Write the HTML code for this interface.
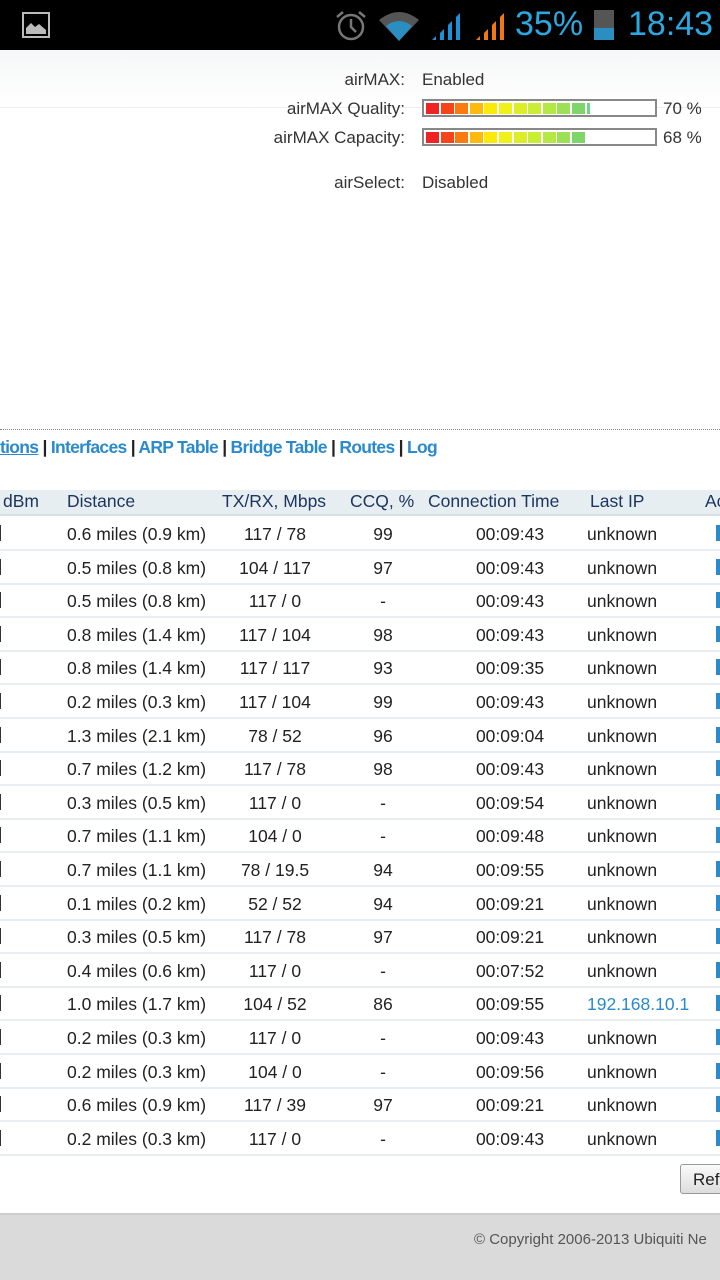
<!DOCTYPE html>
<html><head><meta charset="utf-8"><style>
*{margin:0;padding:0;box-sizing:border-box}
body{width:720px;height:1280px;position:relative;overflow:hidden;background:#fff;font-family:"Liberation Sans",sans-serif;color:#222}
.a{position:absolute;white-space:nowrap}
.sb{position:absolute;left:0;top:0;width:720px;height:50px;background:#000}
.lbl{font-size:17px;color:#333}
.bar{position:absolute;left:422px;width:235px;height:18px;border:2px solid #888;background:#fff}
.seg{position:absolute;top:2px;height:11px;width:13px}
.row{position:absolute;left:0;width:720px;height:34px;border-bottom:2px solid #e8eef2;font-size:17.5px;color:#222}
.row div{position:absolute;top:7px;white-space:nowrap}
.c{text-align:center}
</style></head><body>
<div class="sb">
<svg class="a" style="left:22px;top:12px" width="28" height="26" viewBox="0 0 28 26"><rect x="1" y="1" width="26" height="24" fill="none" stroke="#bbb" stroke-width="2"/><path d="M4 22 L4 16 L9 11 L13 15 L17 12 L24 18 L24 22Z" fill="#bbb"/></svg>
<svg class="a" style="left:334px;top:9px" width="34" height="32" viewBox="0 0 34 32"><circle cx="17" cy="18" r="12" fill="none" stroke="#777" stroke-width="2.5"/><path d="M17 10 L17 18 L22 23" stroke="#777" stroke-width="2.5" fill="none"/><path d="M3 8 L9 3 M31 8 L25 3" stroke="#777" stroke-width="2.5"/></svg>
<svg class="a" style="left:378px;top:10px" width="42" height="32" viewBox="0 0 42 32"><path d="M1 10 Q21 -6 41 10 L21 31Z" fill="#555"/><path d="M8 16 Q21 6 34 16 L21 31Z" fill="#2a8fc0"/></svg>
<svg class="a" style="left:430px;top:10px" width="34" height="32" viewBox="0 0 34 32"><path d="M2 30 L6 30 L6 26Z M10 30 L14 30 L14 19 L10 23Z M18 30 L22 30 L22 11 L18 15Z M26 30 L30 30 L30 3 L26 7Z" fill="#1e90d8"/></svg>
<svg class="a" style="left:474px;top:10px" width="34" height="32" viewBox="0 0 34 32"><path d="M2 30 L6 30 L6 26Z M10 30 L14 30 L14 19 L10 23Z M18 30 L22 30 L22 11 L18 15Z M26 30 L30 30 L30 3 L26 7Z" fill="#f07818"/></svg>
<div class="a" style="left:515px;top:5px;font-size:34px;color:#2ba8e0">35%</div>
<div class="a" style="left:594px;top:10px;width:20px;height:30px;background:#555"></div>
<div class="a" style="left:594px;top:28px;width:20px;height:12px;background:#2a8fc0"></div>
<div class="a" style="left:628px;top:5px;font-size:34px;color:#2ba8e0">18:43</div>
</div>
<div class="a" style="left:0;top:50px;width:720px;height:58px;background:linear-gradient(#f6f7f8,#fff)"></div>
<div class="a" style="left:0;top:107px;width:720px;height:1px;background:#eee"></div>
<div class="a lbl" style="right:315px;top:70px">airMAX:</div>
<div class="a lbl" style="left:422px;top:70px">Enabled</div>
<div class="a lbl" style="right:315px;top:99px">airMAX Quality:</div>
<div class="a lbl" style="right:315px;top:128px">airMAX Capacity:</div>
<div class="a lbl" style="left:663px;top:99px">70 %</div>
<div class="a lbl" style="left:663px;top:128px">68 %</div>
<div class="a lbl" style="right:315px;top:173px">airSelect:</div>
<div class="a lbl" style="left:422px;top:173px">Disabled</div>
<div class="bar" style="top:99px" id="b1"></div>
<div class="bar" style="top:128px" id="b2"></div>
<div class="a" style="left:0;top:429px;width:720px;border-top:1px dotted #888"></div>
<div class="a" style="left:0;top:437px;font-size:17.5px;font-weight:bold;color:#2a8acb;letter-spacing:-0.7px"><span style="text-decoration:underline">tions</span> <span style="color:#222">|</span> Interfaces <span style="color:#222">|</span> ARP Table <span style="color:#222">|</span> Bridge Table <span style="color:#222">|</span> Routes <span style="color:#222">|</span> Log</div>
<div class="a" style="left:0;top:490px;width:720px;height:26px;background:#e6eef2;border-bottom:2px solid #d8e0e4"></div>
<div class="a" style="left:0;top:491px;font-size:17.5px;color:#1e3560">
<span class="a" style="left:3px">dBm</span><span class="a" style="left:67px">Distance</span><span class="a" style="left:222px">TX/RX, Mbps</span><span class="a" style="left:350px">CCQ, %</span><span class="a" style="left:428px">Connection Time</span><span class="a" style="left:590px">Last IP</span><span class="a" style="left:705px">Ac</span></div>
<div id="rows"></div>
<div class="a" style="left:680px;top:1164px;width:50px;height:30px;border:1px solid #999;border-radius:3px;background:linear-gradient(#fafafa,#ddd);font-size:17px;padding:5px 0 0 12px">Refr</div>
<div class="a" style="left:0;top:1213px;width:720px;height:67px;background:#dadada;border-top:2px solid #ccc"></div>
<div class="a" style="left:474px;top:1231px;font-size:15px;color:#555">© Copyright 2006-2013 Ubiquiti Ne</div>
<script>
var cols=['#ee2424','#f5431a','#fb7a10','#fdb90c','#fbe90a','#eef11a','#dcee28','#c9ee35','#b3e845','#9be055','#7ed56a'];
function bar(id,n,extra){var b=document.getElementById(id),h='';for(var i=0;i<n;i++)h+='<div class="seg" style="left:'+(2+i*14.6)+'px;background:'+cols[i]+'"></div>';if(extra)h+='<div class="seg" style="left:'+(2+n*14.6)+'px;width:3px;background:#6ed38a"></div>';b.innerHTML=h;}
bar('b1',11,1);bar('b2',11,0);
var d=[["0.6 miles (0.9 km)","117 / 78","99","00:09:43","unknown"],["0.5 miles (0.8 km)","104 / 117","97","00:09:43","unknown"],["0.5 miles (0.8 km)","117 / 0","-","00:09:43","unknown"],["0.8 miles (1.4 km)","117 / 104","98","00:09:43","unknown"],["0.8 miles (1.4 km)","117 / 117","93","00:09:35","unknown"],["0.2 miles (0.3 km)","117 / 104","99","00:09:43","unknown"],["1.3 miles (2.1 km)","78 / 52","96","00:09:04","unknown"],["0.7 miles (1.2 km)","117 / 78","98","00:09:43","unknown"],["0.3 miles (0.5 km)","117 / 0","-","00:09:54","unknown"],["0.7 miles (1.1 km)","104 / 0","-","00:09:48","unknown"],["0.7 miles (1.1 km)","78 / 19.5","94","00:09:55","unknown"],["0.1 miles (0.2 km)","52 / 52","94","00:09:21","unknown"],["0.3 miles (0.5 km)","117 / 78","97","00:09:21","unknown"],["0.4 miles (0.6 km)","117 / 0","-","00:07:52","unknown"],["1.0 miles (1.7 km)","104 / 52","86","00:09:55","192.168.10.1"],["0.2 miles (0.3 km)","117 / 0","-","00:09:43","unknown"],["0.2 miles (0.3 km)","104 / 0","-","00:09:56","unknown"],["0.6 miles (0.9 km)","117 / 39","97","00:09:21","unknown"],["0.2 miles (0.3 km)","117 / 0","-","00:09:43","unknown"]];
var h='';d.forEach(function(r,i){var t=517+i*33.6;h+='<div class="row" style="top:'+t+'px"><div style="left:-1px;top:8px;width:2px;height:16px;background:#333"></div><div style="left:67px">'+r[0]+'</div><div class="c" style="left:215px;width:120px">'+r[1]+'</div><div class="c" style="left:343px;width:80px">'+r[2]+'</div><div class="c" style="left:450px;width:120px">'+r[3]+'</div><div style="left:587px'+(r[4]!="unknown"?';color:#2a8acb':'')+'">'+r[4]+'</div><div style="left:716px;top:8px;width:4px;height:16px;background:#2a8acb"></div></div>';});
document.getElementById('rows').innerHTML=h;
</script>
</body></html>
